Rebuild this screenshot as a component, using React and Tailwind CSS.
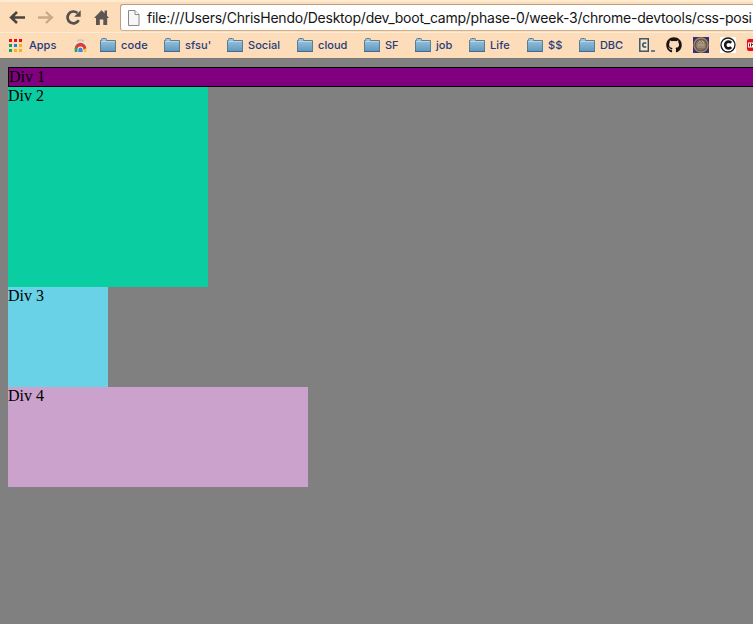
import React from "react";
import { FaGithub } from "react-icons/fa";

const bookmarks = [
  { name: "code", width: "w-[64px]", tracking: "tracking-[0.15px]" },
  { name: "sfsu'", width: "w-[63px]", tracking: "tracking-[0.1px]" },
  { name: "Social", width: "w-[70px]", tracking: "tracking-[0.05px]" },
  { name: "cloud", width: "w-[67px]", tracking: "tracking-[0.05px]" },
  { name: "SF", width: "w-[51px]", tracking: "tracking-[-0.1px]" },
  { name: "job", width: "w-[54px]", tracking: "tracking-[0.1px]" },
  { name: "Life", width: "w-[58px]", tracking: "tracking-[0.1px]" },
  { name: "$$", width: "w-[52px]", tracking: "tracking-[0.1px]" },
  { name: "DBC", width: "w-[60px]", tracking: "tracking-[-0.1px]" },
];

function Folder() {
  return (
    <svg width="17" height="15" viewBox="0 0 17 15" className="shrink-0">
      <defs>
        <linearGradient id="folder" x1="0" y1="0" x2="0" y2="1">
          <stop offset="0" stopColor="#a2c8de" />
          <stop offset="1" stopColor="#5f98bf" />
        </linearGradient>
      </defs>
      <path d="M.5 13.5V2.5H1.5V1.5Q1.5.5 2.5.5H5.5Q6.5.5 6.5 1.5V2.5H15.5V13.5Z" fill="url(#folder)" stroke="#587d96" />
      <path d="M1 3.5H15" stroke="#b9d6e5" />
      <path d="M0 13.5H16" stroke="#416b88" />
    </svg>
  );
}

function Apps() {
  const colors = ["#f20d0d", "#f20d0d", "#f20d0d", "#12a05c", "#1681f5", "#f6b413", "#12a05c", "#f6b413", "#f6b413"];
  return (
    <svg width="13" height="13" viewBox="0 0 13 13" shapeRendering="crispEdges" className="shrink-0">
      {colors.map((color, i) => (
        <rect key={i} x={(i % 3) * 5} y={Math.floor(i / 3) * 5} width="3" height="3" fill={color} />
      ))}
    </svg>
  );
}

function WebStore() {
  return (
    <svg width="13" height="14" viewBox="0 0 13 14" className="block shrink-0">
      <path d="M4 3V1H9V3" fill="none" stroke="#bab8b5" />
      <path d="M.5 3H12.5V13H.5Z" fill="#e9e6e2" />
      <path d="M.7 9.5A5.8 5.8 0 0 1 12.3 9.5L9 11H3Z" fill="#e33b2e" />
      <path d="M.7 8.5L5 13H.7Z" fill="#29a35a" />
      <path d="M12.3 9L8 13H12.3Z" fill="#f4c62b" />
      <path d="M1 8L4 13H7L4 9Z" fill="#29a35a" />
      <path d="M3.6 13V10.5A2.9 2.9 0 0 1 9.4 10.5V13Z" fill="#fff" />
      <path d="M4.3 13V10.8A2.2 2.2 0 0 1 8.7 10.8V13Z" fill="#4385db" />
    </svg>
  );
}

function Toolbar() {
  return (
    <div className="flex h-[32px] w-full items-start border-t-2 border-[#ffead2]">
      <svg width="120" height="30" viewBox="0 2 120 30" className="shrink-0" fill="none">
        <path d="M25 17.5H12M17 12L11.2 17.5L17 23" stroke="#48443f" strokeWidth="2.6" />
        <path d="M38 17.5H51M46 12L51.8 17.5L46 23" stroke="#c8aa8b" strokeWidth="2.4" />
        <path d="M78.7 20.1A5.9 5.9 0 1 1 77.4 13" stroke="#55504b" strokeWidth="2.7" />
        <path d="M80.7 10.2V16.7H74.2Z" fill="#55504b" />
        <path d="M94 18L101.5 10.2L104.6 13.3V10.5H107V15.7L109 18H107.2V25H103.3V19.5H99.8V25H96V18Z" fill="#5b5651" />
      </svg>
      <div className="mt-[2px] flex h-[27px] min-w-0 grow items-center rounded-l-[3px] border border-r-0 border-[#bd9f80] border-b-[#ceb092] bg-white pl-[6px]">
        <svg width="13" height="16" viewBox="0 0 13 16" className="mr-[7px] shrink-0">
          <path d="M1.5.5H8L12 4.5V15.5H1.5Z" fill="#f7f7f7" stroke="#888" />
          <path d="M8 .5V4.5H12" fill="#fff" stroke="#888" />
        </svg>
        <span className="whitespace-nowrap font-['Inter',sans-serif] text-[14px] leading-[20px] tracking-[-0.235px] text-[#151515]">
          file:///Users/ChrisHendo/Desktop/dev_boot_camp/phase-0/week-3/chrome-devtools/css-posi
        </span>
      </div>
    </div>
  );
}

function BookmarksBar() {
  return (
    <div className="flex h-[26px] w-full items-center border-t border-[#ffebd2] pl-[9px] font-['Inter',sans-serif] text-[11px] font-medium text-[#253b7c]">
      <div className="flex w-[65px] shrink-0 items-center gap-[7px]">
        <Apps />
        <span>Apps</span>
      </div>
      <div className="w-[26px] shrink-0"><WebStore /></div>
      {bookmarks.map(({ name, width, tracking }) => (
        <div key={name} className={`flex ${width} ${tracking} shrink-0 items-center gap-[4px]`}>
          <Folder />
          <span>{name}</span>
        </div>
      ))}
      <svg width="27" height="16" viewBox="0 0 27 16" className="mb-px shrink-0">
        <rect x=".8" y="1.8" width="8.5" height="12.4" fill="#fce4c8" stroke="#304f62" strokeWidth="1.4" />
        <path d="M7.2 6.1H5.4Q3.8 6.1 3.8 8T5.4 9.9H7.2" fill="none" stroke="#304f62" strokeWidth="1.5" />
        <path d="M12 14H16" stroke="#304f62" strokeWidth="1.4" />
      </svg>
      <FaGithub size={16} className="mr-[11px] mb-px shrink-0 text-[#171515]" />
      <svg width="16" height="16" viewBox="0 0 16 16" className="mr-[11px] mb-px shrink-0">
        <rect width="16" height="16" fill="#313181" />
        <circle cx="8" cy="8" r="7" fill="#5b5065" stroke="#a9894d" strokeWidth="1.3" />
        <circle cx="8" cy="8" r="4.8" fill="#80705f" stroke="#a18855" strokeDasharray="1.5 1" />
        <path d="M5 11V6L7 4L8 6L10 4L11 7V11M5 8H11M7 6V11M9 6V11" fill="none" stroke="#c0ac94" strokeWidth=".8" />
      </svg>
      <svg width="16" height="16" viewBox="0 0 16 16" className="mr-[11px] mb-px shrink-0">
        <rect width="16" height="16" fill="#fff" />
        <circle cx="8" cy="8" r="7" fill="#fff" stroke="#171717" strokeWidth="1.3" />
        <path d="M11.2 5.8A3.4 3.4 0 1 0 11.2 10.2" fill="none" stroke="#171717" strokeWidth="2.6" />
      </svg>
      <svg width="6" height="12" viewBox="0 0 6 12" className="mb-px shrink-0">
        <path d="M6 0H2Q0 0 0 2V10Q0 12 2 12H6Z" fill="#e60c18" />
        <path d="M1 3.5H6V8.5H1Z" fill="#fff" />
        <path d="M2.5 4.5V7.5M4.5 7.5V4.5L6 6" fill="none" stroke="#8f1118" />
      </svg>
    </div>
  );
}

export default function App() {
  return (
    <div className="flex h-[624px] w-[753px] flex-col overflow-hidden bg-[#808080]">
      <header className="h-[58px] shrink-0 overflow-hidden bg-[#fddcb9]">
        <Toolbar />
        <BookmarksBar />
      </header>
      <main className="border-t border-[#777777] pt-[8px] pl-[8px] font-['Liberation_Serif',serif] text-[16px] leading-[18px] text-black">
        <div className="h-[20px] border border-r-0 border-black bg-[#800080]">Div 1</div>
        <div className="h-[200px] w-[200px] bg-[#0acda2]">Div 2</div>
        <div className="h-[100px] w-[100px] bg-[#69d2e7]">Div 3</div>
        <div className="h-[100px] w-[300px] bg-[#cba2cc]">Div 4</div>
      </main>
    </div>
  );
}
